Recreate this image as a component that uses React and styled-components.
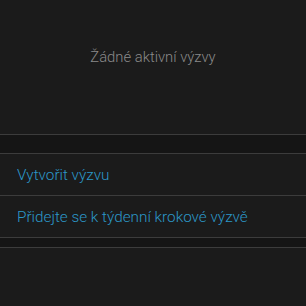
import React from "react";
import styled, { createGlobalStyle } from "styled-components";

const Global = createGlobalStyle`
  html, body {
    margin: 0;
    padding: 0;
    background: #1b1b1b;
  }
  body {
    font-family: Roboto, "Noto Sans", sans-serif;
  }
`;

const Screen = styled.div`
  width: 306px;
  height: 306px;
  background: #1b1b1b;
  display: flex;
  flex-direction: column;
  overflow: hidden;
`;

const Empty = styled.div`
  height: 134px;
  display: flex;
  justify-content: center;
  padding-top: 48px;
  box-sizing: border-box;
  color: #8a8a8a;
  font-size: 14.8px;
  font-weight: 300;
`;

const Gap = styled.div`
  height: ${(p) => p.h}px;
  background: #151515;
  border-top: 1px solid #3c3c3c;
  border-bottom: 1px solid #3c3c3c;
`;

const Row = styled.div`
  height: 41px;
  display: flex;
  align-items: center;
  padding-left: 17px;
  color: #2b97c8;
  font-size: 15.3px;
  font-weight: 300;
  border-bottom: ${(p) => (p.last ? "none" : "1px solid #3c3c3c")};
`;

export default function App() {
  return (
    <Screen>
      <Global />
      <Empty>Žádné aktivní výzvy</Empty>
      <Gap h={18} />
      <Row>Vytvořit výzvu</Row>
      <Row last>Přidejte se k týdenní krokové výzvě</Row>
      <Gap h={9} />
    </Screen>
  );
}
